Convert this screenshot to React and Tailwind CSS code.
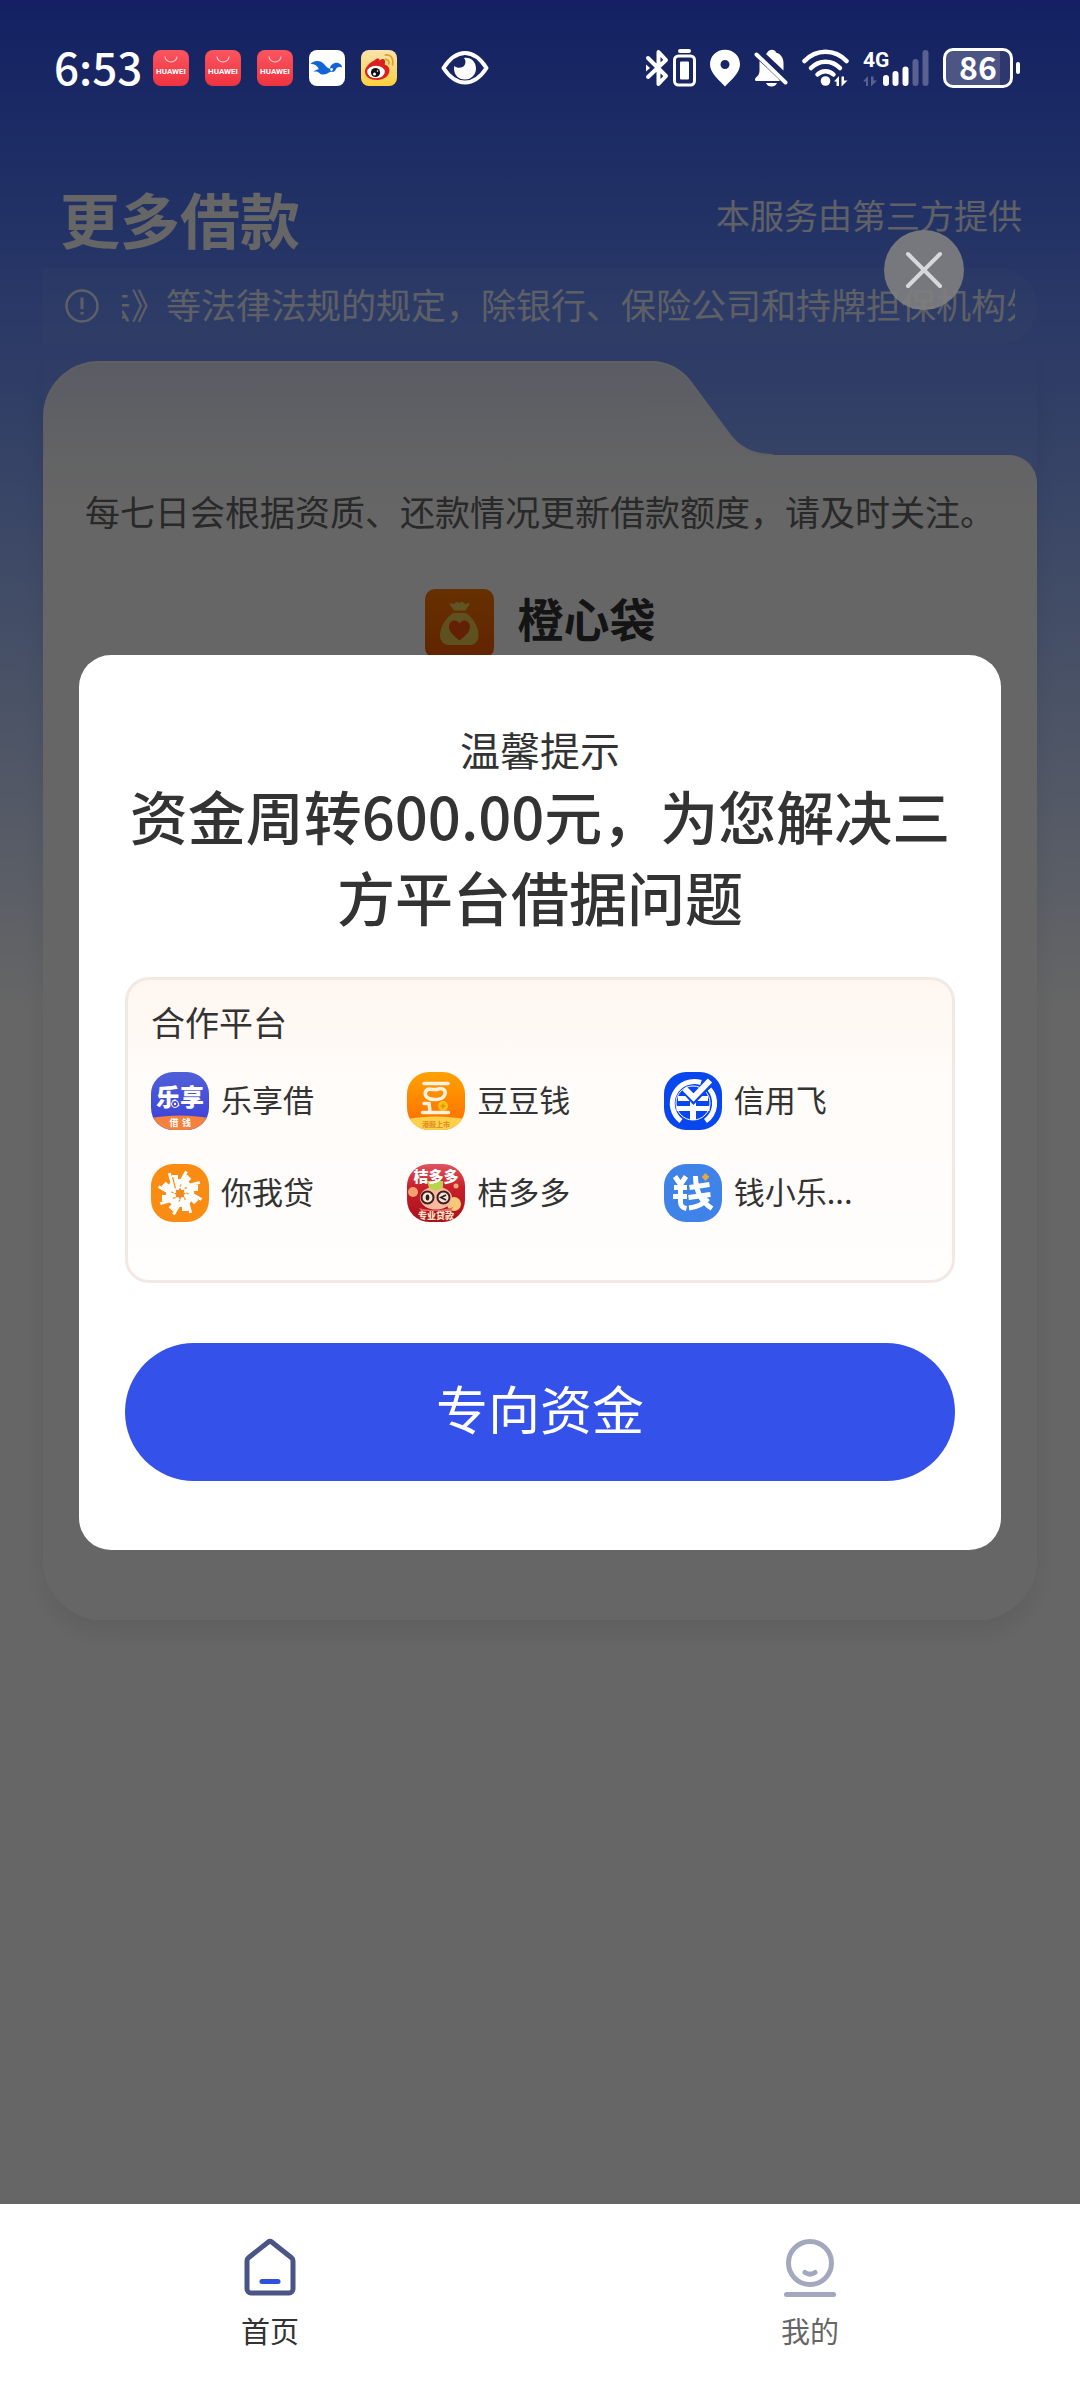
import React from 'react';

const HuaweiIcon = () => (
  <svg className="w-9 h-9" viewBox="0 0 36 36" aria-hidden="true">
    <defs>
      <linearGradient id="hw" x1="0" y1="0" x2="0" y2="1">
        <stop offset="0" stopColor="#fb5560" />
        <stop offset="1" stopColor="#ee3340" />
      </linearGradient>
    </defs>
    <rect width="36" height="36" rx="8" fill="url(#hw)" />
    <path d="M12 6.500a6 5.500 0 0 0 12 0" fill="none" stroke="#ffc9c9" strokeWidth="1.200" />
    <text x="18" y="23.500" fontSize="8" fontWeight="700" textAnchor="middle" fill="#fff" fontFamily="Roboto, sans-serif">HUAWEI</text>
  </svg>
);

const BirdIcon = () => (
  <svg className="w-9 h-9" viewBox="0 0 36 36" aria-hidden="true">
    <rect width="36" height="36" rx="8" fill="#fff" />
    <path d="M1.500 14c3-3.500 10-4.500 14 .5 2 2.500 3.500 4 5.500 4 0-3.500 3.500-6 7-5.800 3 .2 4.500 2 5.300 4.700-2.500-.8-4.500-.3-6 1-1 1.500-1 3-3.500 3.500-2-.3-3.500.3-5.500 1.500-3 1.500-6 1.500-8-.5-2-1.500-4-1.500-6-1 1.500-2 4-2.500 5.500-3-1.500-3-4-5-8.300-4.900z" fill="#1464d8" />
    <circle cx="22.500" cy="19.500" r="1.400" fill="#fff" />
  </svg>
);

const WeiboIcon = () => (
  <svg className="w-9 h-9" viewBox="0 0 36 36" aria-hidden="true">
    <defs>
      <linearGradient id="wb" x1="0" y1="0" x2="0" y2="1">
        <stop offset="0" stopColor="#f9e3ae" />
        <stop offset="1" stopColor="#fdd03e" />
      </linearGradient>
    </defs>
    <rect width="36" height="36" rx="8" fill="url(#wb)" />
    <path d="M14 10c2-2 4.500-2 4.500.5 2-1.500 5-2.500 5.500.5.300 1.500-.3 2.500-.3 3.500 2.500.8 4.800 2.800 4.800 6 0 5-5.500 9.500-12.500 9.500S4 26.500 4 21.500C4 17 9.500 12 14 10z" fill="#dc1f1f" />
    <ellipse cx="15" cy="22" rx="8.800" ry="6.200" fill="#fff" />
    <circle cx="14.500" cy="22.500" r="4.600" fill="#111" />
    <circle cx="13.500" cy="24" r="1.500" fill="#fff" />
    <circle cx="16.500" cy="21" r=".8" fill="#fff" />
    <path d="M24.500 9.500c2.500-.5 4 2 3.300 4.500M24.500 5c5.500-1 8.500 4 7 10" fill="none" stroke="#e0a030" strokeWidth="1.800" strokeLinecap="round" />
  </svg>
);

const EyeIcon = () => (
  <svg className="w-12 h-9" viewBox="0 0 48 36" aria-hidden="true">
    <path d="M2.500 18C9 8 16 3 24 3s15 5 21.500 15C39 28 32 32.500 24 32.500S9 28 2.500 18z" fill="none" stroke="#fff" strokeWidth="4" strokeLinejoin="round" />
    <path d="M23 8c7-1 12 4 12 10.500 0 6-4.500 11-11 11s-11-4.500-11-11c0-.8.200-1.800.4-2.500 3 3 9 2 10.500-1.500C25 12 24.500 10 23 8z" fill="#fff" />
  </svg>
);

const BluetoothIcon = () => (
  <svg className="w-[51px] h-[38px]" viewBox="0 0 51 38" aria-hidden="true">
    <path d="M3 9l18 18-7.500 8V3L21 11 3 28" fill="none" stroke="#fff" strokeWidth="4" strokeLinejoin="round" strokeLinecap="round" />
    <path d="M1 15.500l4 3.500-4 3.500z" fill="#fff" />
    <rect x="33" y="0" width="13" height="4" rx="2" fill="#fff" />
    <rect x="29.500" y="7" width="20" height="29" rx="4" fill="none" stroke="#fff" strokeWidth="3" />
    <rect x="35" y="12.500" width="9" height="18" rx="1" fill="#fff" />
  </svg>
);

const PinIcon = () => (
  <svg className="w-[30px] h-[38px]" viewBox="0 0 30 38" aria-hidden="true">
    <path d="M15 0.800C6.500.8 0 7 0 15.500 0 24 9 31 15 37.500 21 31 30 24 30 15.500 30 7 23.500.8 15 .8zm0 10.200a4.500 4.500 0 1 1 0 9 4.500 4.500 0 0 1 0-9z" fill="#fff" fillRule="evenodd" />
  </svg>
);

const BellOffIcon = () => (
  <svg className="w-[34px] h-[38px]" viewBox="0 0 34 38" aria-hidden="true">
    <path d="M13 4c1-2.200 3-3.200 5-3.200s3.500 1 4 2.700c5 1.500 7.500 5.500 7.500 10.500v7.500L12 5z" fill="#fff" />
    <path d="M5.500 12L24 29.500l2 2.500H2.500C.5 32 .5 29.500 2 28.500c2.500-2 3.500-4 3.500-7z" fill="#fff" />
    <path d="M2.500 5.500l29 28" stroke="#fff" strokeWidth="4" strokeLinecap="round" />
    <path d="M12 34h11c-1 2.500-3 3.500-5.500 3.500S13 36.500 12 34z" fill="#fff" />
  </svg>
);

const WifiIcon = () => (
  <svg className="w-[47px] h-[38px]" viewBox="0 0 47 38" aria-hidden="true">
    <g fill="none" stroke="#fff" strokeWidth="4.500" strokeLinecap="round">
      <path d="M2.500 12C14-.5 33-.5 44.500 12" />
      <path d="M9 19c8-8.500 21-8.500 29 0" />
      <path d="M15.500 25.500c4.500-4.500 11.500-4.500 16 0" />
    </g>
    <circle cx="23.500" cy="32" r="4.800" fill="#fff" />
    <path d="M32 32.500l5-5.500v10h-2.500v-4.500zM39.500 27.500v10l6-6h-3.500v-4z" fill="#fff" />
  </svg>
);

const SignalIcon = () => (
  <svg className="w-[66px] h-[38px] overflow-visible" viewBox="0 0 66 38" aria-hidden="true">
    <text x="0" y="18" fontSize="21" fontWeight="700" fill="#fff" fontFamily="Roboto, sans-serif">4G</text>
    <path d="M0 32.500l5-5.500v10H3v-4.500zM8 27.500v10l6-6h-3.500v-4z" fill="#59628f" />
    <g fill="#fff">
      <rect x="20" y="26" width="6" height="11" rx="3" />
      <rect x="29.500" y="22" width="6" height="15" rx="3" />
      <rect x="39.500" y="17.500" width="6" height="19.500" rx="3" />
    </g>
    <rect x="49.500" y="10" width="6" height="27" rx="3" fill="#59628f" />
    <rect x="59.500" y="1" width="6" height="36" rx="3" fill="#59628f" />
  </svg>
);

const BatteryIcon = () => (
  <div className="flex items-center gap-[3px]">
    <span className="w-[70px] h-10 rounded-[10px] border-3 border-white bg-linear-to-r from-[#4c5583] from-85% to-[#2e386e] to-85% flex items-center justify-center text-[32px] leading-[32px] pb-1 font-bold">
      86
    </span>
    <span className="w-1 h-3 rounded-full bg-white" />
  </div>
);

const BagIcon = () => (
  <svg className="w-[69px] h-[69px]" viewBox="0 0 69 69" aria-hidden="true">
    <defs>
      <linearGradient id="bag" x1="0" y1="0" x2="0" y2="1">
        <stop offset="0" stopColor="#ff7a00" />
        <stop offset="1" stopColor="#f45a00" />
      </linearGradient>
    </defs>
    <rect width="69" height="69" rx="10" fill="url(#bag)" />
    <path d="M24.500 14c3 0 4 2 5.500 0 1.500-1.500 3-1.500 4.500.3 1.500-1.800 3-1.800 4.500-.3 1.500 2 3 0 5.500 0-.5 3-2.500 4.500-4 7.500H29c-1.500-3-4-4.500-4.500-7.500z" fill="#f0d35c" />
    <path d="M28 24h13c7 4.500 12.500 14 12.500 22 0 6-3.500 10-9 10h-20c-6 0-9.500-4-9.500-10C15 38 21 28.500 28 24z" fill="#ecc84f" />
    <path d="M34.500 51.500C29 47 24 43 24 37.500c0-6 7.500-8.500 10.500-3 3-5.500 10.500-3 10.500 3 0 5.500-5 9.500-10.500 14z" fill="#f4500a" />
  </svg>
);

const svgFont = "'Noto Sans CJK SC', sans-serif";

const LexiangLogo = () => (
  <svg className="w-full h-full" viewBox="0 0 58 58" aria-hidden="true">
    <defs>
      <linearGradient id="lx" x1="0" y1="0" x2="0" y2="1">
        <stop offset="0" stopColor="#5060d8" />
        <stop offset="1" stopColor="#3b3fd8" />
      </linearGradient>
    </defs>
    <rect width="58" height="58" fill="url(#lx)" />
    <path d="M0 46c18-3.500 40-3.500 58 0v12H0z" fill="#f5813f" />
    <text x="29" y="34" fontSize="24" fontWeight="900" textAnchor="middle" fill="#fff" fontFamily={svgFont}>乐享</text>
    <circle cx="24" cy="32" r="3.500" fill="#4348d8" stroke="#fff" strokeWidth="1" />
    <circle cx="24" cy="32" r="1.200" fill="#fff" />
    <text x="23" y="54" fontSize="9" fontWeight="700" textAnchor="middle" fill="#fff" fontFamily={svgFont}>借</text>
    <text x="35.500" y="54" fontSize="9" fontWeight="700" textAnchor="middle" fill="#fff" fontFamily={svgFont}>钱</text>
  </svg>
);

const DoudouLogo = () => (
  <svg className="w-full h-full" viewBox="0 0 58 58" aria-hidden="true">
    <defs>
      <linearGradient id="dd" x1="0" y1="0" x2="0" y2="1">
        <stop offset="0" stopColor="#ffa200" />
        <stop offset="1" stopColor="#ff6a00" />
      </linearGradient>
    </defs>
    <rect width="58" height="58" fill="url(#dd)" />
    <path d="M0 47c18-3.500 40-3.500 58 0v11H0z" fill="#ffd04a" />
    <g fill="none" stroke="#fff3e0" strokeLinecap="round" strokeWidth="3.500">
      <path d="M17 11.500h24" />
      <path d="M22 17c-5 1.500-5 7.500 0 9.500 5 1.800 13 1.500 15.500-3 2.500-5-2-8-6-6.500-3.500 1.300-5.500.5-9.500 0z" />
      <path d="M17 31.500h5l1 8M15.500 40.500h26" />
    </g>
    <circle cx="36" cy="34" r="5" fill="#ffc21a" />
    <path d="M36 31.500v5M33.500 34h5" stroke="#f08a00" strokeWidth="1.500" />
    <text x="29" y="55" fontSize="7" fontWeight="700" textAnchor="middle" fill="#e08a20" fontFamily={svgFont}>港股上市</text>
  </svg>
);

const XinyongLogo = () => (
  <svg className="w-full h-full" viewBox="0 0 58 58" aria-hidden="true">
    <rect width="58" height="58" fill="#0a46ee" />
    <path d="M17 49A22 22 0 0 1 37 10.500M45.500 17A22 22 0 0 1 41.500 49" fill="none" stroke="#fff" strokeWidth="5" />
    <circle cx="29" cy="31" r="17" fill="none" stroke="#fff" strokeWidth="1" />
    <path d="M14 26.500h30M12.500 36.500h33" stroke="#fff" strokeWidth="5" />
    <path d="M29 26v22" stroke="#fff" strokeWidth="6" />
    <path d="M20.500 18l9 10L46 11" fill="none" stroke="#0a46ee" strokeWidth="7" />
    <path d="M20.500 16.500l9 9L46 8.500" fill="none" stroke="#fff" strokeWidth="6" />
  </svg>
);

const NiwoLogo = () => (
  <svg className="w-full h-full" viewBox="0 0 58 58" aria-hidden="true">
    <rect width="58" height="58" fill="#fa8c14" />
    <circle cx="29" cy="29" r="14" fill="#fff" />
    {[0, 45, 90, 135, 180, 225, 270, 315].map((deg) => (
      <g key={deg} transform={`rotate(${deg} 29 29)`} fill="none">
        <path d="M24 22V11" stroke="#fff" strokeWidth="6" />
        <path d="M26 24L35.500 7.500" stroke="#fff" strokeWidth="3" />
        <path d="M29 22.500L35 12.500" stroke="#fa8c14" strokeWidth="1.200" />
      </g>
    ))}
    <path d="M29 23.500l1.500 2.800 3-.8-.8 3 2.300 1-2.300 1.300.8 2.800-3-.5-1.500 2.400-1.500-2.400-3 .5.800-2.800-2.300-1.300 2.300-1-.8-3 3 .8z" fill="#f08a1e" />
  </svg>
);

const JieduoLogo = () => (
  <svg className="w-full h-full" viewBox="0 0 58 58" aria-hidden="true">
    <defs>
      <linearGradient id="jd" x1="0" y1="0" x2="0" y2="1">
        <stop offset="0" stopColor="#dd5560" />
        <stop offset="0.400" stopColor="#c8202a" />
        <stop offset="1" stopColor="#a81018" />
      </linearGradient>
    </defs>
    <rect width="58" height="58" fill="url(#jd)" />
    <circle cx="6" cy="28" r="5" fill="#f5a070" />
    <circle cx="47" cy="40" r="7" fill="#f6c877" />
    <circle cx="49" cy="22" r="2.500" fill="#f6a877" />
    <ellipse cx="29" cy="34" rx="16" ry="11.500" fill="#f8b9a0" />
    <path d="M12 44c10 3 24 3 34-1l-2 4H14z" fill="#e8686a" />
    <path d="M20 17h16v6l-7 4-7-3z" fill="#b9d34a" />
    <g fill="#fbe0d2" stroke="#40201c" strokeWidth="2">
      <circle cx="20.500" cy="33.500" r="6" />
      <circle cx="36.500" cy="33.500" r="6" />
    </g>
    <ellipse cx="20.500" cy="33.500" rx="1.800" ry="3" fill="#222" />
    <path d="M39 31l-5 2.500 5 2.500" fill="none" stroke="#222" strokeWidth="1.800" />
    <text x="29" y="17.500" fontSize="15" fontWeight="900" textAnchor="middle" fill="#fff" fontFamily={svgFont}>桔多多</text>
    <text x="29" y="54.500" fontSize="9" fontWeight="900" textAnchor="middle" fill="#ffe3c8" fontFamily={svgFont}>专业贷款</text>
  </svg>
);

const QianxiaoLogo = () => (
  <svg className="w-full h-full" viewBox="0 0 58 58" aria-hidden="true">
    <rect width="58" height="58" fill="#3f82e8" />
    <g fill="none" stroke="#fff" strokeWidth="5" strokeLinecap="butt">
      <path d="M11 12.500l5.500 8 5.500-8M16.500 20v18c0 4 1.500 5.500 6 6.500M10 23.500h13M9 32.500h14" />
      <path d="M31.500 12c0 12 3 24 16.500 32.500M25.500 23.500l20-3M24.500 33.500l22-3M44 34.500c-4 5-10 8.500-19 9.500" />
    </g>
    <path d="M41.500 9l3.800 4-3.800 4-3.800-4z" fill="#e8a93c" />
  </svg>
);

const partners = [
  { name: '乐享借', Logo: LexiangLogo },
  { name: '豆豆钱', Logo: DoudouLogo },
  { name: '信用飞', Logo: XinyongLogo },
  { name: '你我贷', Logo: NiwoLogo },
  { name: '桔多多', Logo: JieduoLogo },
  { name: '钱小乐...', Logo: QianxiaoLogo },
];

const StatusBar = () => (
  <div className="relative z-20 h-[136px] pl-[54px] pr-[60px] flex items-center justify-between text-white">
    <div className="flex items-center gap-[11px]">
      <span className="text-[44px] leading-[44px] pb-1 font-medium">6:53</span>
      <div className="flex items-center gap-4">
        <HuaweiIcon />
        <HuaweiIcon />
        <HuaweiIcon />
        <BirdIcon />
        <WeiboIcon />
        <span className="ml-7 flex">
          <EyeIcon />
        </span>
      </div>
    </div>
    <div className="flex items-center gap-[14px]">
      <BluetoothIcon />
      <PinIcon />
      <BellOffIcon />
      <WifiIcon />
      <SignalIcon />
      <BatteryIcon />
    </div>
  </div>
);

const LoanCard = () => (
  <section className="mx-[43px] mt-[17px] h-[1259px] flex flex-col rounded-b-[60px] shadow-[0_12px_24px_rgba(0,0,0,0.08)]">
    {/* Folder tab */}
    <div className="flex h-[94px]">
      <div className="w-[600px] rounded-tl-[56px] border-t-2 border-l-2 border-[#eceffa] bg-linear-to-b from-[#e1e6fb] to-[#f7f8fc]" />
      <svg className="w-[130px] h-[94px]" viewBox="0 0 130 94" aria-hidden="true">
        <defs>
          <linearGradient id="tab" x1="0" y1="0" x2="0" y2="1">
            <stop offset="0" stopColor="#e1e6fb" />
            <stop offset="1" stopColor="#f7f8fc" />
          </linearGradient>
        </defs>
        <path d="M0 0h7c18 0 32 8 42 22l38 52c10 13 24 20 43 20H0z" fill="url(#tab)" />
        <path d="M0 1h7c18 0 32 8 42 22l38 51c10 13 24 20 43 20" fill="none" stroke="#eceffa" strokeWidth="2" />
      </svg>
    </div>
    <div className="flex-1 rounded-tr-[28px] rounded-b-[60px] bg-linear-to-b from-[#f7f8fc] to-white to-[60px] pt-[30px]">
      <p className="text-center whitespace-nowrap text-[35px] leading-[52px] text-[#666]">
        每七日会根据资质、还款情况更新借款额度，请及时关注。
      </p>
      <div className="mt-[51px] flex items-center justify-center gap-6">
        <BagIcon />
        <h2 className="text-[46px] leading-[58px] pb-3 font-bold text-[#333]">橙心袋</h2>
      </div>
    </div>
  </section>
);

const PromptDialog = () => (
  <div
    role="dialog"
    aria-labelledby="prompt-title"
    className="mx-[79px] w-full rounded-[32px] bg-white px-[46px] pt-[68px] pb-[69px] text-[#333]"
  >
    <p className="text-center text-[40px] leading-[52px]">温馨提示</p>
    <h2 id="prompt-title" className="text-center text-[58px] leading-[81px] font-medium">
      资金周转600.00元，为您解决三方平台借据问题
    </h2>

    <div className="mt-10 rounded-3xl border-3 border-[#f3e9e4] bg-linear-to-b from-[#fff6f0] via-[#fffbf8] via-30% to-[#fffefd] pt-[18px] pb-[58px] pl-[23px] pr-8">
      <h3 className="text-[34px] leading-[48px]">合作平台</h3>
      <ul className="mt-[26px] grid grid-cols-3 gap-y-[34px]">
        {partners.map(({ name, Logo }) => (
          <li key={name} className="flex items-center gap-3">
            <span className="w-[58px] h-[58px] rounded-[22px] overflow-hidden">
              <Logo />
            </span>
            <span className="text-[31px] leading-[46px] pb-1">{name}</span>
          </li>
        ))}
      </ul>
    </div>

    <button type="button" className="mt-[60px] h-[138px] w-full rounded-full bg-[#3452ea] pb-2 text-[52px] leading-[72px] text-white">
      专向资金
    </button>
  </div>
);

const TabBar = () => (
  <nav className="relative h-[184px] bg-white grid grid-cols-2 text-[29px] leading-[44px]">
    <a href="#home" className="flex flex-col items-center pt-[33px] gap-[11px] text-[#333]">
      <svg className="w-[58px] h-[60px]" viewBox="0 0 58 60" aria-hidden="true">
        <path d="M6 24a4 4 0 0 1 1.500-3.200L27 5.200a3.200 3.200 0 0 1 4 0l19.500 15.600A4 4 0 0 1 52 24v28a4 4 0 0 1-4 4H10a4 4 0 0 1-4-4z" fill="none" stroke="#4a5585" strokeWidth="5" strokeLinejoin="round" />
        <path d="M21 44.500h16" stroke="#2f52dc" strokeWidth="5" strokeLinecap="round" />
      </svg>
      首页
    </a>
    <a href="#mine" className="flex flex-col items-center pt-[33px] gap-[11px] text-[#666]">
      <svg className="w-[58px] h-[60px]" viewBox="0 0 58 60" aria-hidden="true">
        <g fill="none" stroke="#a3a8be" strokeWidth="5" strokeLinecap="round">
          <circle cx="29" cy="26" r="21.500" />
          <path d="M24 35.500c3 2 7 2 10 0" />
          <path d="M5.500 57.500h47" />
        </g>
      </svg>
      我的
    </a>
  </nav>
);

const App = () => {
  return (
    <div className="min-h-screen flex flex-col bg-white font-['Noto_Sans_CJK_SC',sans-serif]">
      <div className="relative flex-1 flex flex-col bg-linear-to-b from-[#3250f7] to-white to-[1010px]">
        <StatusBar />

        <header className="mt-[46px] pl-[60px] pr-[58px] flex items-start justify-between text-white">
          <h1 className="text-[60px] leading-[72px] font-bold">更多借款</h1>
          <span className="text-[34px] leading-[66px] text-white/90">本服务由第三方提供</span>
        </header>

        {/* Scrolling notice */}
        <div className="mx-[43px] mt-[14px] h-[76px] rounded-r-full bg-white/5 px-[22px] flex items-center gap-[23px] text-white/85">
          <svg className="w-[34px] h-[34px] shrink-0" viewBox="0 0 34 34" aria-hidden="true">
            <circle cx="17" cy="17" r="15.500" fill="none" stroke="currentColor" strokeWidth="2.500" />
            <path d="M17 8.500v11.500M17 23v2.500" stroke="currentColor" strokeWidth="3" />
          </svg>
          <div className="flex-1 overflow-hidden">
            <p className="-ml-[26px] pb-1 whitespace-nowrap text-[35px] leading-[52px]">
              法》等法律法规的规定，除银行、保险公司和持牌担保机构外
            </p>
          </div>
        </div>

        <LoanCard />

        <div className="absolute inset-0 z-10 bg-black/60 flex items-center justify-center">
          <PromptDialog />
          <button
            type="button"
            aria-label="关闭"
            className="absolute top-[230px] right-[116px] w-20 h-20 rounded-full bg-[#808080]/90 flex items-center justify-center"
          >
            <svg className="w-10 h-10" viewBox="0 0 40 40" aria-hidden="true">
              <path d="M4 4l32 32M36 4L4 36" stroke="#d6d8dc" strokeWidth="4" strokeLinecap="round" />
            </svg>
          </button>
        </div>
      </div>

      <TabBar />
    </div>
  );
};

export default App;
